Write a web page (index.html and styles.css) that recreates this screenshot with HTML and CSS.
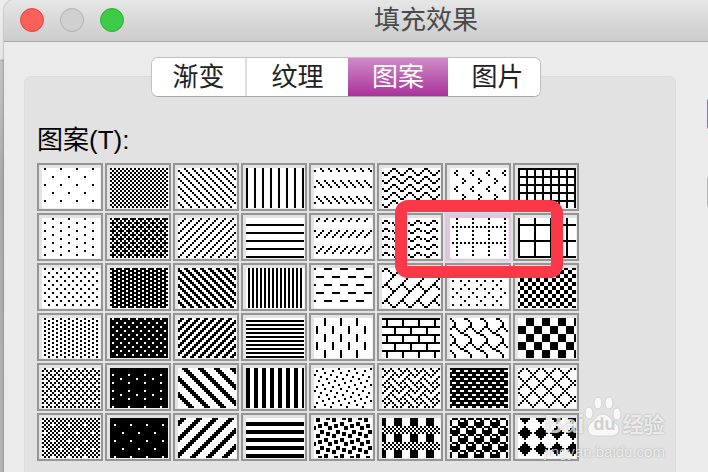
FILE: index.html
```html
<!DOCTYPE html>
<html lang="zh-CN">
<head>
    <meta charset="UTF-8">
    <meta name="viewport" content="width=device-width, initial-scale=1.0">
    <title>填充效果</title>
    <link rel="stylesheet" href="styles.css">
</head>
<body>

    <div class="window">
        <!-- Title bar -->
        <header class="titlebar">
            <div class="lights">
                <button class="light close" aria-label="关闭"></button>
                <button class="light minimize" aria-label="最小化" disabled></button>
                <button class="light maximize" aria-label="缩放"></button>
            </div>
            <h1>填充效果</h1>
        </header>

        <div class="content">
            <main class="panel">
                <!-- Tabs -->
                <div class="tabs" role="tablist">
                    <button class="tab" role="tab">渐变</button>
                    <button class="tab" role="tab">纹理</button>
                    <button class="tab active" role="tab" aria-selected="true">图案</button>
                    <button class="tab" role="tab">图片</button>
                </div>

                <h2 id="patternLabel">图案(T):</h2>
                <div class="swatches" id="swatches" role="group" aria-labelledby="patternLabel"></div>
            </main>

            <aside class="actions">
                <button class="action primary" aria-label="确定"></button>
                <button class="action" aria-label="取消"></button>
            </aside>
        </div>
    </div>

    <div class="highlight"></div>

    <!-- Watermark -->
    <div class="watermark">
        <div class="brand">
            <span class="bai">Bai</span>
            <span class="paw">
                <svg width="38" height="42" viewBox="0 0 38 42">
                    <ellipse cx="5" cy="17" rx="4" ry="6"/>
                    <ellipse cx="14" cy="7" rx="4" ry="6"/>
                    <ellipse cx="25" cy="7" rx="4" ry="6"/>
                    <ellipse cx="33" cy="18" rx="4" ry="6"/>
                    <path d="M19 18c-5 0-7 4-10 7-3 3-6 5-5 10 1 4 5 5 8 5h15c4 0 7-2 8-6 0-5-4-7-6-9-3-3-5-7-10-7z"/>
                </svg>
                <span class="du">du</span>
            </span>
            <span class="jingyan">经验</span>
        </div>
        <div class="url">jingyan.baidu.com</div>
    </div>

    <script>
        // 8x8 bitmaps, one byte per row, listed row by row as they appear in the grid
        const patterns = [
            { name: "5%", rows: "4000000004000000" },
            { name: "50%", rows: "AA55AA55AA55AA55" },
            { name: "浅色下对角线", rows: "1188442211884422" },
            { name: "浅色竖线", rows: "8888888888888888" },
            { name: "下对角虚线", rows: "1188000000004422" },
            { name: "之字形", rows: "0609906006099060" },
            { name: "草皮", rows: "0010201000020102" },
            { name: "小网格", rows: "FF888888FF888888" },

            { name: "10%", rows: "0400400004004000" },
            { name: "60%", rows: "BB55EE55BB55EE55" },
            { name: "浅色上对角线", rows: "1122448811224488" },
            { name: "浅色横线", rows: "000000FF000000FF" },
            { name: "上对角虚线", rows: "2244000000008811" },
            { name: "波浪线", rows: "0060940300609403" },
            { name: "点式网格", rows: "1000100055001000", selected: true },
            { name: "大网格", rows: "808080FF80808080" },

            { name: "20%", rows: "4400110044001100" },
            { name: "70%", rows: "DD77DD77DD77DD77" },
            { name: "深色下对角线", rows: "99CC663399CC6633" },
            { name: "窄竖线", rows: "5555555555555555" },
            { name: "横虚线", rows: "8700000078000000" },
            { name: "对角砖形", rows: "6090090604081020" },
            { name: "点式菱形", rows: "0100440010004400" },
            { name: "小棋盘", rows: "9966669999666699" },

            { name: "25%", rows: "4411441144114411" },
            { name: "75%", rows: "BBFFEEFFBBFFEEFF" },
            { name: "深色上对角线", rows: "66CC993366CC9933" },
            { name: "窄横线", rows: "00FF00FF00FF00FF" },
            { name: "竖虚线", rows: "0404040440404040" },
            { name: "横向砖形", rows: "FF202020FF020202" },
            { name: "瓦形", rows: "8140202060900906" },
            { name: "大棋盘", rows: "0F0F0F0FF0F0F0F0" },

            { name: "30%", rows: "44AA11AA44AA11AA" },
            { name: "80%", rows: "FFFFFFBFFFFBFFBF" },
            { name: "宽下对角线", rows: "381C0E0783C1E070" },
            { name: "深色竖线", rows: "CCCCCCCCCCCCCCCC" },
            { name: "小纸屑", rows: "0840048010022001" },
            { name: "编织物", rows: "8854224588142251" },
            { name: "棚架", rows: "FF66FF99FF66FF99" },
            { name: "轮廓式菱形", rows: "2844820182442810" },

            { name: "40%", rows: "AA55AA51AA55AA15" },
            { name: "90%", rows: "FFFFFFDFFFFFFFFD" },
            { name: "宽上对角线", rows: "70E0C183070E1C38" },
            { name: "深色横线", rows: "0000FFFF0000FFFF" },
            { name: "大纸屑", rows: "63600636B181181B" },
            { name: "苏格兰方格呢", rows: "C3C3C3C355AA55AA" },
            { name: "球体", rows: "77898F8F7798F8F8" },
            { name: "实心菱形", rows: "7C38100010387CFE" }
        ];

        const swatches = document.getElementById('swatches');
        patterns.forEach((item, i) => {
            let dots = '';
            for (let y = 0; y < 8; y++) {
                const row = parseInt(item.rows.slice(y * 2, y * 2 + 2), 16);
                for (let x = 0; x < 8; x++) {
                    if (row & (128 >> x)) {
                        dots += `M${x * 2} ${y * 2}h2v2h-2z`;
                    }
                }
            }
            const button = document.createElement('button');
            button.classList.add('swatch');
            if (item.selected) {
                button.classList.add('selected');
            }
            button.setAttribute('aria-label', item.name);
            button.innerHTML = `
                <svg width="58" height="40" shape-rendering="crispEdges">
                    <pattern id="p${i}" width="16" height="16" patternUnits="userSpaceOnUse"><path d="${dots}"/></pattern>
                    <rect width="58" height="40" fill="url(#p${i})"/>
                </svg>
            `;
            swatches.appendChild(button);
        });
    </script>

</body>
</html>
```
FILE: styles.css
```css
* {
    margin: 0;
    padding: 0;
    box-sizing: border-box;
}

body {
    height: 100vh;
    padding-left: 4px;
    overflow: hidden;
    position: relative;
    background: linear-gradient(#eee 0, #e6e6e6 59px, #b4b4b4 60px, #c4c4c4 62px, #aaa 180px, #b4b4b4 100%);
    font-family: "Liberation Sans", "Noto Sans CJK SC", sans-serif;
    color: #222;
}

button {
    border: none;
    font: inherit;
}

.window {
    height: 100%;
    display: flex;
    flex-direction: column;
    overflow: hidden;
    background: #ebebeb;
    border-radius: 10px 0 0 0;
    box-shadow: 0 0 2px rgba(0, 0, 0, 0.5);
}

/* Title bar */
.titlebar {
    height: 42px;
    flex-shrink: 0;
    display: grid;
    grid-template-columns: 1fr auto 1fr;
    align-items: center;
    padding: 0 0 1px 16px;
    background: linear-gradient(#e6e6e6, #cccccc);
    border-bottom: 1px solid #a6a6a6;
}

.titlebar h1 {
    font-size: 26px;
    line-height: 40px;
    font-weight: normal;
    color: #4a4a4a;
    padding-left: 124px;
}

.lights {
    display: flex;
    gap: 16px;
}

.light {
    width: 24px;
    height: 24px;
    border-radius: 50%;
    border: 1px solid #b0b0b0;
    background: #d0d0d0;
}

.close {
    background: #fc605b;
    border-color: #e2463f;
}

.maximize {
    background: #3ecb48;
    border-color: #2bae33;
}

/* Dialog body */
.content {
    flex: 1;
    display: flex;
    gap: 31px;
    padding: 34px 0 0 20px;
}

.panel {
    flex: 1;
    height: 500px;
    padding: 0 12px;
    background: #e2e2e2;
    border: 1px solid #dcdcdc;
    border-radius: 7px;
}

.tabs {
    display: grid;
    grid-template-columns: 95px 101px 100px 92px;
    width: 390px;
    margin: -20px 0 0 114px;
    border: 1px solid #c0c0c0;
    border-bottom-color: #a8a8a8;
    border-radius: 7px;
    background: #fff;
    overflow: hidden;
}

.tab {
    height: 38px;
    background: #fff;
    font-size: 26px;
    line-height: 38px;
    color: #222;
}

.tab:first-child {
    border-right: 2px solid #dedede;
}

.tab:last-child {
    padding-left: 7px;
}

.tab.active {
    background: linear-gradient(#cf8cc8, #aa329c);
    color: #fff;
}

.panel h2 {
    margin-top: 23px;
    font-size: 26px;
    line-height: 40px;
    font-weight: normal;
    color: #000;
}

/* Pattern grid */
.swatches {
    display: grid;
    grid-template-columns: repeat(8, 66px);
    gap: 2px;
    margin-top: 3px;
}

.swatch {
    height: 48px;
    padding: 3px 1px 1px 3px;
    border: 2px solid #959595;
    background: #e3e3e3;
}

.swatch svg {
    display: block;
    background: #fff;
    box-shadow: 1px 1px 0 #f0f0f0;
}

.swatch.selected {
    border-color: #dfc5df;
    background: #dfc5df;
}

/* Dialog buttons, clipped by the window edge */
.actions {
    flex: 0 0 1px;
    min-width: 0;
    padding-top: 20px;
}

.action {
    display: block;
    width: 120px;
    height: 36px;
    margin-bottom: 42px;
    border: 1px solid #b4b4b4;
    border-radius: 6px;
    background: #fff;
}

.action.primary {
    background: #aa329c;
    border-color: #b75bae;
}

.highlight {
    position: absolute;
    left: 395px;
    top: 200px;
    width: 168px;
    height: 78px;
    border: 12px solid #fb3748;
    border-radius: 13px;
}

/* Watermark */
.watermark {
    position: absolute;
    left: 544px;
    top: 396px;
    color: rgba(255, 255, 255, 0.75);
    text-shadow: 0 0 2px rgba(0, 0, 0, 0.3);
}

.brand {
    display: flex;
    align-items: flex-end;
    height: 42px;
}

.bai {
    font-size: 26px;
    line-height: 28px;
    font-weight: bold;
}

.paw {
    position: relative;
    width: 38px;
    height: 42px;
}

.paw svg {
    fill: rgba(255, 255, 255, 0.75);
    stroke: #d2d2d2;
}

.du {
    position: absolute;
    left: 9px;
    top: 18px;
    font-size: 18px;
    line-height: 20px;
    font-weight: bold;
    color: #d0d0d0;
    text-shadow: none;
}

.jingyan {
    font-size: 21px;
    line-height: 26px;
    font-weight: bold;
}

.url {
    font-size: 15px;
    line-height: 20px;
    margin-top: 4px;
}
```
